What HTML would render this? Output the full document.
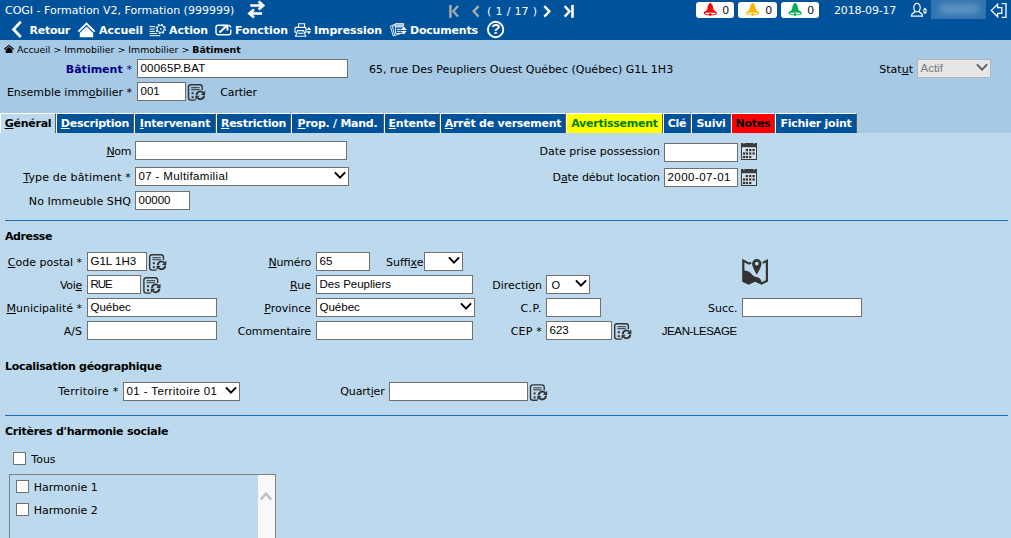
<!DOCTYPE html>
<html lang="fr">
<head>
<meta charset="utf-8">
<title>COGI - Bâtiment</title>
<style>
html,body{margin:0;padding:0;}
body{width:1011px;height:538px;overflow:hidden;position:relative;background:#bdd9ed;font-family:"DejaVu Sans","Liberation Sans",sans-serif;font-size:11px;color:#000;}
.abs,.t,.l,.in,.sel,.tab{position:absolute;white-space:nowrap;}
#hdr{position:absolute;left:0;top:0;width:1011px;height:40px;background:#00529b;}
#sub{position:absolute;left:0;top:40px;width:1011px;height:93px;background:#a6c9e5;}
.w{color:#fff;}
.b{font-weight:bold;}
.t{line-height:14px;height:14px;}
.l{line-height:14px;height:14px;text-align:right;}
.in,.sel{box-sizing:border-box;height:19px;border:1px solid #707070;background:#fff;font-family:"Liberation Sans","DejaVu Sans",sans-serif;font-size:11.5px;line-height:17px;padding-left:2.5px;color:#000;overflow:hidden;}
.sel svg{position:absolute;right:2.15px;top:3px;}
.tab{top:113px;height:20px;line-height:19px;background:#00529b;color:#fff;font-weight:bold;font-size:11px;text-align:center;box-sizing:border-box;border-top:1px solid #fff;border-left:1px solid #fff;border-right:1px solid #5f5a55;letter-spacing:-0.25px;}
.hr{position:absolute;left:5px;width:1003px;height:1px;background:#1c6bb0;}
.cb{position:absolute;width:13px;height:13px;box-sizing:border-box;border:1px solid #707070;background:#fff;}
.badge{position:absolute;top:2px;height:16px;background:#fff;border-radius:3px;}
.badge span{position:absolute;right:5px;top:1px;line-height:14px;font-size:11.5px;color:#000;font-family:"Liberation Sans",sans-serif;}
</style>
</head>
<body>
<div id="hdr"></div>
<div id="sub"></div>
<div class="t w" style="left:5px;top:4px;">COGI - Formation V2, Formation (999999)</div>
<div class="t w" style="left:487px;top:5px;word-spacing:0.7px;">( 1 / 17 )</div>
<div class="t w" style="left:834px;top:4px;letter-spacing:-0.18px;">2018-09-17</div>
<div class="badge" style="left:696px;width:38px;"><span>0</span></div>
<div class="badge" style="left:738px;width:39px;"><span>0</span></div>
<div class="badge" style="left:781px;width:38px;"><span>0</span></div>
<div class="abs" style="left:931px;top:0;width:55px;height:19px;background:#2f72ae;overflow:hidden;"><div class="abs" style="left:8px;top:5px;width:40px;height:8px;background:#6fa0cc;filter:blur(4px);"></div></div>
<div class="t w b" style="left:29.6px;top:24px;letter-spacing:-0.3px;">Retour</div>
<div class="t w b" style="left:99px;top:24px;letter-spacing:-0.05px;">Accueil</div>
<div class="t w b" style="left:169px;top:24px;letter-spacing:-0.05px;">Action</div>
<div class="t w b" style="left:235px;top:24px;letter-spacing:-0.05px;">Fonction</div>
<div class="t w b" style="left:314px;top:24px;letter-spacing:-0.05px;">Impression</div>
<div class="t w b" style="left:410px;top:24px;letter-spacing:-0.2px;">Documents</div>
<div class="t w b" style="left:491.3px;top:21px;font-size:15px;line-height:16px;height:16px;font-family:'Liberation Sans',sans-serif;">?</div>
<div class="t" style="left:17px;top:42.5px;font-size:9.4px;">Accueil &gt; Immobilier &gt; Immobilier &gt; <b>Bâtiment</b></div>
<div class="l b" style="left:-38px;width:170px;top:63px;color:#000080;">Bâtiment <span style="font-weight:normal;">*</span></div>
<div class="in" style="left:137px;top:59px;width:211px;letter-spacing:0.2px;">00065P.BAT</div>
<div class="t " style="left:369px;top:63px;">65, rue Des Peupliers Ouest Québec (Québec) G1L 1H3</div>
<div class="l " style="left:743px;width:170px;top:63px;">Stat<u>u</u>t</div>
<div class="sel" style="left:917px;top:59px;width:74px;background:#e6e6e6;color:#7a7a7a;border-color:#b4b4b4;">Actif<svg width="12" height="9" viewBox="0 0 12 9"><path d="M0.9 1.3 L6 6.7 L11.1 1.3" fill="none" stroke="#5a5a5a" stroke-width="1.85"/></svg></div>
<div class="l " style="left:-38px;width:170px;top:86px;">Ensemble imm<u>o</u>bilier *</div>
<div class="in" style="left:137px;top:82px;width:49px;">001</div>
<div class="t " style="left:220.3px;top:86px;letter-spacing:-0.15px;">Cartier</div>
<div class="tab" style="left:0px;width:56px;background:#bdd9ed;color:#000;"><u>G</u>énéral</div>
<div class="tab" style="left:56px;width:78px;"><u>D</u>escription</div>
<div class="tab" style="left:134px;width:82px;"><u>I</u>ntervenant</div>
<div class="tab" style="left:216px;width:75px;"><u>R</u>estriction</div>
<div class="tab" style="left:291px;width:93px;"><u>P</u>rop. / Mand.</div>
<div class="tab" style="left:384px;width:56px;"><u>E</u>ntente</div>
<div class="tab" style="left:440px;width:126px;"><u>A</u>rrêt de versement</div>
<div class="tab" style="left:566px;width:97px;background:#ffff00;color:#008000;">Avertissement</div>
<div class="tab" style="left:663px;width:28px;">Clé</div>
<div class="tab" style="left:691px;width:40px;">Suivi</div>
<div class="tab" style="left:731px;width:44px;background:#ff0000;color:#000;">Notes</div>
<div class="tab" style="left:775px;width:82px;">Fichier joint</div>
<div class="l " style="left:-39px;width:170px;top:145px;letter-spacing:-0.4px;"><u>N</u>om</div>
<div class="in" style="left:135px;top:141px;width:212px;"></div>
<div class="l " style="left:-39px;width:170px;top:171px;letter-spacing:0.16px;"><u>T</u>ype de bâtiment *</div>
<div class="sel" style="left:135px;top:167px;width:214px;letter-spacing:0.36px;">07 - Multifamilial<svg width="12" height="9" viewBox="0 0 12 9"><path d="M0.9 1.3 L6 6.7 L11.1 1.3" fill="none" stroke="#000" stroke-width="1.85"/></svg></div>
<div class="l " style="left:-39px;width:170px;top:195px;letter-spacing:0.07px;">No Immeuble SHQ</div>
<div class="in" style="left:135px;top:191px;width:55px;">00000</div>
<div class="l " style="left:490px;width:170px;top:145px;">Date prise possession</div>
<div class="in" style="left:664px;top:143px;width:74px;"></div>
<div class="l " style="left:490px;width:170px;top:171px;letter-spacing:-0.08px;">D<u>a</u>te début location</div>
<div class="in" style="left:664px;top:168px;width:74px;letter-spacing:0.46px;">2000-07-01</div>
<div class="hr" style="top:220px;"></div>
<div class="t b" style="left:5px;top:230px;letter-spacing:-0.4px;">Adresse</div>
<div class="l " style="left:-88px;width:170px;top:256px;"><u>C</u>ode postal *</div>
<div class="in" style="left:87px;top:252px;width:60px;">G1L 1H3</div>
<div class="l " style="left:141px;width:170px;top:256px;letter-spacing:-0.2px;"><u>N</u>uméro</div>
<div class="in" style="left:316px;top:252px;width:54px;">65</div>
<div class="t " style="left:386px;top:256px;">Suffi<u>x</u>e</div>
<div class="sel" style="left:424px;top:252px;width:39px;"><svg width="12" height="9" viewBox="0 0 12 9"><path d="M0.9 1.3 L6 6.7 L11.1 1.3" fill="none" stroke="#000" stroke-width="1.85"/></svg></div>
<div class="l " style="left:-88px;width:170px;top:279px;letter-spacing:-0.3px;">Voi<u>e</u></div>
<div class="in" style="left:87px;top:275px;width:54px;letter-spacing:-1px;">RUE</div>
<div class="l " style="left:141px;width:170px;top:279px;"><u>R</u>ue</div>
<div class="in" style="left:316px;top:275px;width:157px;">Des Peupliers</div>
<div class="l " style="left:372px;width:170px;top:279px;">Directi<u>o</u>n</div>
<div class="sel" style="left:546px;top:275px;width:44px;padding-left:4.5px;font-size:11px;line-height:18px;">O<svg width="12" height="9" viewBox="0 0 12 9"><path d="M0.9 1.3 L6 6.7 L11.1 1.3" fill="none" stroke="#000" stroke-width="1.85"/></svg></div>
<div class="l " style="left:-88px;width:170px;top:302px;"><u>M</u>unicipalité *</div>
<div class="in" style="left:87px;top:298px;width:130px;">Québec</div>
<div class="l " style="left:141px;width:170px;top:302px;"><u>P</u>rovince</div>
<div class="sel" style="left:316px;top:298px;width:159px;">Québec<svg width="12" height="9" viewBox="0 0 12 9"><path d="M0.9 1.3 L6 6.7 L11.1 1.3" fill="none" stroke="#000" stroke-width="1.85"/></svg></div>
<div class="l " style="left:372px;width:170px;top:302px;letter-spacing:0.5px;">C.P.</div>
<div class="in" style="left:546px;top:298px;width:55px;"></div>
<div class="l " style="left:567.5px;width:170px;top:302px;">Succ.</div>
<div class="in" style="left:742px;top:298px;width:120px;"></div>
<div class="l " style="left:-88px;width:170px;top:325px;">A/S</div>
<div class="in" style="left:87px;top:321px;width:130px;"></div>
<div class="l " style="left:141px;width:170px;top:325px;letter-spacing:-0.13px;">Commentaire</div>
<div class="in" style="left:316px;top:321px;width:157px;"></div>
<div class="l " style="left:372px;width:170px;top:325px;letter-spacing:0.2px;">CEP *</div>
<div class="in" style="left:546px;top:321px;width:66px;">623</div>
<div class="t" style="left:661.7px;top:323.6px;font-family:'Liberation Sans','DejaVu Sans',sans-serif;font-size:11.5px;letter-spacing:-0.38px;">JEAN-LESAGE</div>
<div class="t b" style="left:5px;top:360px;letter-spacing:-0.32px;">Localisation géographique</div>
<div class="l " style="left:-51.5px;width:170px;top:385px;letter-spacing:0.22px;">Territoire *</div>
<div class="sel" style="left:123px;top:382px;width:117px;letter-spacing:0.41px;">01 - Territoire 01<svg width="12" height="9" viewBox="0 0 12 9"><path d="M0.9 1.3 L6 6.7 L11.1 1.3" fill="none" stroke="#000" stroke-width="1.85"/></svg></div>
<div class="l " style="left:214.5px;width:170px;top:385px;letter-spacing:-0.18px;">Quart<u>i</u>er</div>
<div class="in" style="left:389px;top:382px;width:139px;"></div>
<div class="hr" style="top:415px;"></div>
<div class="t b" style="left:5px;top:425px;letter-spacing:-0.26px;">Critères d'harmonie sociale</div>
<div class="cb" style="left:13px;top:452px;"></div>
<div class="t " style="left:31.3px;top:453px;">Tous</div>
<div class="abs" style="left:9px;top:474px;width:267px;height:80px;border:1px solid #808080;box-sizing:border-box;"></div>
<div class="abs" style="left:258px;top:475px;width:17px;height:70px;background:#f9f9f9;"></div>
<div class="cb" style="left:16px;top:480px;"></div>
<div class="t " style="left:33.7px;top:481px;">Harmonie 1</div>
<div class="cb" style="left:16px;top:503px;"></div>
<div class="t " style="left:33.7px;top:504px;">Harmonie 2</div>
<!-- icon overlay -->
<svg class="abs" style="left:0;top:0;pointer-events:none;" width="1011" height="538" viewBox="0 0 1011 538" fill="none">
<!-- swap arrows -->
<g stroke="#fff" stroke-width="2.6" stroke-linejoin="miter">
<path d="M250.3 5.5 H262"/><path d="M258.6 1.6 L263.2 5.5 L258.6 9.4"/>
<path d="M262 13.5 H250"/><path d="M254 9.6 L249.4 13.5 L254 17.4"/>
</g>
<!-- record nav -->
<g stroke="#a9aaad" stroke-width="2.3">
<path d="M450.4 4.9 V17.8" stroke-width="2.5"/><path d="M458 6.1 L453.3 11.35 L458 16.6"/>
<path d="M478.6 6.1 L473.6 11.35 L478.6 16.6"/>
</g>
<g stroke="#fff" stroke-width="2.3">
<path d="M544.3 6.1 L549.4 11.35 L544.3 16.6"/>
<path d="M564.7 6.1 L569.6 11.35 L564.7 16.6"/><path d="M572.5 4.9 V17.8" stroke-width="2.6"/>
</g>
<!-- toolbar: back chevron -->
<path d="M20.8 21.8 L13.6 29.4 L20.8 37" stroke="#fff" stroke-width="2.8"/>
<!-- home -->
<path d="M78.3 31.6 L86.5 23.6 L94.7 31.6" stroke="#fff" stroke-width="1.9"/>
<path d="M86.5 26.6 L93.2 33 V37.2 H79.8 V33 Z" fill="#fff"/>
<!-- action -->
<g stroke="#fff" stroke-width="1">
<path d="M149.6 26.6 H155 M149.6 29.1 H154.6 M149.6 31.4 H154.8 M149.6 33.5 H157 M149.6 35.7 H160.2"/>
<circle cx="160.7" cy="28.9" r="3.6" stroke-width="1"/>
<circle cx="160.7" cy="28.9" r="4.6" stroke-width="1.3" stroke-dasharray="1.8 1.81"/>
<circle cx="160.7" cy="28.9" r="0.8" fill="#fff" stroke="none"/>
</g>
<!-- fonction -->
<g stroke="#fff" stroke-width="1.4">
<path d="M223.5 25.3 H218.2 Q216 25.3 216 27.5 V32.6 Q216 34.8 218.2 34.8 H228.6 Q230.8 34.8 230.8 32.6 V29.5"/>
<path d="M219.4 32.4 L227 25.8" stroke-width="2"/>
<path d="M222.4 25.5 H227.5 V30.6" stroke-width="1.9"/>
<path d="M228.4 25.3 Q230.8 25.3 230.8 27.6" stroke-width="1.2"/>
</g>
<!-- printer -->
<g stroke="#fff" stroke-width="1.1">
<path d="M298.6 27.4 V23.8 H304.6 V27.4"/>
<path d="M296.3 32.3 H295 V28.4 Q295 27.4 296 27.4 H305 Q306 27.4 306 28.4 V32.3 H304.9"/>
<path d="M297.6 30.6 H303.6 L305.8 36.2 H295.6 Z"/>
<path d="M298 33.3 H303.4" />
</g>
<path d="M308.9 26.9 L311.3 30.1 H306.5 Z M308.9 34.2 L311.3 31.2 H306.5 Z" fill="#fff"/>
<!-- documents -->
<g stroke="#fff" stroke-width="0.9">
<path d="M395.6 23.6 H403.6 V33.4 H395.6 Z"/>
<path d="M395.4 24 L390.4 26.2 L393.2 36 L400.6 33.6"/>
<path d="M395.4 25.4 L392.4 26.6 L394.6 35 "/>
<path d="M397 29.4 H402 M397 31.4 H401"/>
</g>
<rect x="396.2" y="24.2" width="6.8" height="3.4" fill="#b9cfe6"/>
<path d="M403.8 26.6 L406.8 30.1 H400.8 Z M403.8 34.4 L406.8 31.1 H400.8 Z" fill="#fff" stroke="#00529b" stroke-width="0.9" paint-order="stroke"/>
<!-- help -->
<circle cx="495.6" cy="29.5" r="7.7" stroke="#fff" stroke-width="1.9"/>
<!-- bells -->
<g><path d="M710.3 2.8 Q711.4 3 711.6 4.2 Q712.6 4.8 712.9 6.5 L713.4 9.2 Q713.8 10.6 716.2 11.8 Q717.2 12.6 716.8 13.8 Q716 15 713 15.2 L710.3 15.3 L707.6 15.2 Q704.6 15 703.8 13.8 Q703.4 12.6 704.4 11.8 Q706.8 10.6 707.2 9.2 L707.7 6.5 Q708 4.8 709 4.2 Q709.2 3 710.3 2.8 Z" fill="#ff0000"/>
<ellipse cx="710.3" cy="13.5" rx="5.3" ry="0.9" fill="#fff"/>
<circle cx="710.3" cy="14.4" r="1.3" fill="#ff0000"/></g>
<g transform="translate(42.4 0)"><path d="M710.3 2.8 Q711.4 3 711.6 4.2 Q712.6 4.8 712.9 6.5 L713.4 9.2 Q713.8 10.6 716.2 11.8 Q717.2 12.6 716.8 13.8 Q716 15 713 15.2 L710.3 15.3 L707.6 15.2 Q704.6 15 703.8 13.8 Q703.4 12.6 704.4 11.8 Q706.8 10.6 707.2 9.2 L707.7 6.5 Q708 4.8 709 4.2 Q709.2 3 710.3 2.8 Z" fill="#ffb400"/>
<ellipse cx="710.3" cy="13.5" rx="5.3" ry="0.9" fill="#fff"/>
<circle cx="710.3" cy="14.4" r="1.3" fill="#ffb400"/></g>
<g transform="translate(84.8 0)"><path d="M710.3 2.8 Q711.4 3 711.6 4.2 Q712.6 4.8 712.9 6.5 L713.4 9.2 Q713.8 10.6 716.2 11.8 Q717.2 12.6 716.8 13.8 Q716 15 713 15.2 L710.3 15.3 L707.6 15.2 Q704.6 15 703.8 13.8 Q703.4 12.6 704.4 11.8 Q706.8 10.6 707.2 9.2 L707.7 6.5 Q708 4.8 709 4.2 Q709.2 3 710.3 2.8 Z" fill="#00b050"/>
<ellipse cx="710.3" cy="13.5" rx="5.3" ry="0.9" fill="#fff"/>
<circle cx="710.3" cy="14.4" r="1.3" fill="#00b050"/></g>
<!-- user -->
<g stroke="#fff" stroke-width="1.2">
<ellipse cx="917" cy="7.6" rx="3.2" ry="4.2"/>
<path d="M915.2 11 Q914.8 12.5 912.8 13.4 Q911.5 14.1 911.5 16.1 H922.5 Q922.5 14.1 921.2 13.4 Q919.2 12.5 918.8 11"/>
</g>
<path d="M925 7.4 L927.4 10.4 H922.6 Z M925 14.3 L927.4 11.4 H922.6 Z" fill="#fff"/>
<!-- logout -->
<g stroke="#fff" stroke-width="1.3" stroke-linejoin="miter">
<path d="M991.4 10.4 L997.6 4.4 V7.6 H1001.8 V13.4 H997.6 V16.6 Z"/>
<path d="M1001.6 3.6 H1006 V17.4 H1001.6"/>
</g>
<!-- breadcrumb home -->
<path d="M4.3 49.2 L9 45.4 L13.7 49.2" stroke="#000" stroke-width="1.1"/>
<path d="M9 47 L12.3 49.6 V52.9 H5.7 V49.6 Z" fill="#000"/>

<g transform="translate(187.8 84)" fill="none" stroke="#333" >
<path d="M7.6 16.1 H3.1 Q0.7 16.1 0.7 13.7 V3.1 Q0.7 0.7 3.1 0.7 H12 Q14.4 0.7 14.4 3.1 V6" stroke-width="1.4"/>
<path d="M3.4 3.7 H11.8 M3.4 5.7 H11.8" stroke-width="1"/>
<rect x="3.8" y="8.2" width="2" height="2" fill="#333" stroke="none"/>
<rect x="3.8" y="12.2" width="2" height="2" fill="#333" stroke="none"/>
<path d="M8.8 11.2 A3.7 3.7 0 0 1 15.3 8.7" stroke-width="1.9"/>
<path d="M16.2 11.4 A3.7 3.7 0 0 1 9.7 13.9" stroke-width="1.9"/>
<path d="M17.3 6.6 V10.9 H13 Z" fill="#333" stroke="none"/>
<path d="M7.6 16 V11.7 H11.9 Z" fill="#333" stroke="none"/>
</g>
<g transform="translate(149 254)" fill="none" stroke="#333" >
<path d="M7.6 16.1 H3.1 Q0.7 16.1 0.7 13.7 V3.1 Q0.7 0.7 3.1 0.7 H12 Q14.4 0.7 14.4 3.1 V6" stroke-width="1.4"/>
<path d="M3.4 3.7 H11.8 M3.4 5.7 H11.8" stroke-width="1"/>
<rect x="3.8" y="8.2" width="2" height="2" fill="#333" stroke="none"/>
<rect x="3.8" y="12.2" width="2" height="2" fill="#333" stroke="none"/>
<path d="M8.8 11.2 A3.7 3.7 0 0 1 15.3 8.7" stroke-width="1.9"/>
<path d="M16.2 11.4 A3.7 3.7 0 0 1 9.7 13.9" stroke-width="1.9"/>
<path d="M17.3 6.6 V10.9 H13 Z" fill="#333" stroke="none"/>
<path d="M7.6 16 V11.7 H11.9 Z" fill="#333" stroke="none"/>
</g>
<g transform="translate(143.2 277)" fill="none" stroke="#333" >
<path d="M7.6 16.1 H3.1 Q0.7 16.1 0.7 13.7 V3.1 Q0.7 0.7 3.1 0.7 H12 Q14.4 0.7 14.4 3.1 V6" stroke-width="1.4"/>
<path d="M3.4 3.7 H11.8 M3.4 5.7 H11.8" stroke-width="1"/>
<rect x="3.8" y="8.2" width="2" height="2" fill="#333" stroke="none"/>
<rect x="3.8" y="12.2" width="2" height="2" fill="#333" stroke="none"/>
<path d="M8.8 11.2 A3.7 3.7 0 0 1 15.3 8.7" stroke-width="1.9"/>
<path d="M16.2 11.4 A3.7 3.7 0 0 1 9.7 13.9" stroke-width="1.9"/>
<path d="M17.3 6.6 V10.9 H13 Z" fill="#333" stroke="none"/>
<path d="M7.6 16 V11.7 H11.9 Z" fill="#333" stroke="none"/>
</g>
<g transform="translate(614 323)" fill="none" stroke="#333" >
<path d="M7.6 16.1 H3.1 Q0.7 16.1 0.7 13.7 V3.1 Q0.7 0.7 3.1 0.7 H12 Q14.4 0.7 14.4 3.1 V6" stroke-width="1.4"/>
<path d="M3.4 3.7 H11.8 M3.4 5.7 H11.8" stroke-width="1"/>
<rect x="3.8" y="8.2" width="2" height="2" fill="#333" stroke="none"/>
<rect x="3.8" y="12.2" width="2" height="2" fill="#333" stroke="none"/>
<path d="M8.8 11.2 A3.7 3.7 0 0 1 15.3 8.7" stroke-width="1.9"/>
<path d="M16.2 11.4 A3.7 3.7 0 0 1 9.7 13.9" stroke-width="1.9"/>
<path d="M17.3 6.6 V10.9 H13 Z" fill="#333" stroke="none"/>
<path d="M7.6 16 V11.7 H11.9 Z" fill="#333" stroke="none"/>
</g>
<g transform="translate(529.8 384.2)" fill="none" stroke="#333" >
<path d="M7.6 16.1 H3.1 Q0.7 16.1 0.7 13.7 V3.1 Q0.7 0.7 3.1 0.7 H12 Q14.4 0.7 14.4 3.1 V6" stroke-width="1.4"/>
<path d="M3.4 3.7 H11.8 M3.4 5.7 H11.8" stroke-width="1"/>
<rect x="3.8" y="8.2" width="2" height="2" fill="#333" stroke="none"/>
<rect x="3.8" y="12.2" width="2" height="2" fill="#333" stroke="none"/>
<path d="M8.8 11.2 A3.7 3.7 0 0 1 15.3 8.7" stroke-width="1.9"/>
<path d="M16.2 11.4 A3.7 3.7 0 0 1 9.7 13.9" stroke-width="1.9"/>
<path d="M17.3 6.6 V10.9 H13 Z" fill="#333" stroke="none"/>
<path d="M7.6 16 V11.7 H11.9 Z" fill="#333" stroke="none"/>
</g>
<g transform="translate(741 143)">
<rect x="0.5" y="0.5" width="15" height="16" fill="#cfe2f2" stroke="#3c3c3c" stroke-width="1"/>
<rect x="0" y="0" width="16" height="4.2" fill="#3c3c3c"/>
<rect x="2.4" y="0" width="1" height="1" fill="#bdd9ed"/><rect x="12.6" y="0" width="1" height="1" fill="#bdd9ed"/>
<g fill="#3a2e28">
<rect x="4.8" y="6" width="2.2" height="2.2"/><rect x="8.1" y="6" width="2.2" height="2.2"/><rect x="11.5" y="6" width="2.2" height="2.2"/>
<rect x="1.9" y="9.4" width="2.2" height="2.2"/><rect x="4.8" y="9.4" width="2.2" height="2.2"/><rect x="8.1" y="9.4" width="2.2" height="2.2"/><rect x="11.5" y="9.4" width="2.2" height="2.2"/>
<rect x="1.9" y="12.9" width="2.2" height="2.2"/><rect x="4.8" y="12.9" width="2.2" height="2.2"/><rect x="8.1" y="12.9" width="2.2" height="2.2"/>
</g>
</g>
<g transform="translate(741 169)">
<rect x="0.5" y="0.5" width="15" height="16" fill="#cfe2f2" stroke="#3c3c3c" stroke-width="1"/>
<rect x="0" y="0" width="16" height="4.2" fill="#3c3c3c"/>
<rect x="2.4" y="0" width="1" height="1" fill="#bdd9ed"/><rect x="12.6" y="0" width="1" height="1" fill="#bdd9ed"/>
<g fill="#3a2e28">
<rect x="4.8" y="6" width="2.2" height="2.2"/><rect x="8.1" y="6" width="2.2" height="2.2"/><rect x="11.5" y="6" width="2.2" height="2.2"/>
<rect x="1.9" y="9.4" width="2.2" height="2.2"/><rect x="4.8" y="9.4" width="2.2" height="2.2"/><rect x="8.1" y="9.4" width="2.2" height="2.2"/><rect x="11.5" y="9.4" width="2.2" height="2.2"/>
<rect x="1.9" y="12.9" width="2.2" height="2.2"/><rect x="4.8" y="12.9" width="2.2" height="2.2"/><rect x="8.1" y="12.9" width="2.2" height="2.2"/>
</g>
</g>
<!-- map -->
<g fill="#333">
<path d="M742.2 258.8 L749 262.6 L750.8 261.8 L751.6 263.6 L749 264.8 L744.4 262.4 V270.6 Q749 270.6 752 274.6 Q753.6 277 756.4 277 Q759.4 277 760.6 279.6 L761.8 282.2 L765.8 280.2 V262.6 L763 263.8 L762.2 262 L768 258.9 V281.6 L761.6 284.8 L755 281.8 L748.6 284.8 L742.2 281.8 Z"/>
<path fill-rule="evenodd" d="M756.8 259 A4.7 4.7 0 0 1 761.5 263.7 Q761.5 266.4 756.8 274.8 Q752.1 266.4 752.1 263.7 A4.7 4.7 0 0 1 756.8 259 Z M756.8 261.7 A1.9 1.9 0 0 0 756.8 265.5 A1.9 1.9 0 0 0 756.8 261.7 Z"/>
</g>
<!-- scroll arrow -->
<path d="M260.8 499.6 L266 493.6 L271.2 499.6" stroke="#c1c1c1" stroke-width="2.4"/>
</svg>
</body>
</html>
